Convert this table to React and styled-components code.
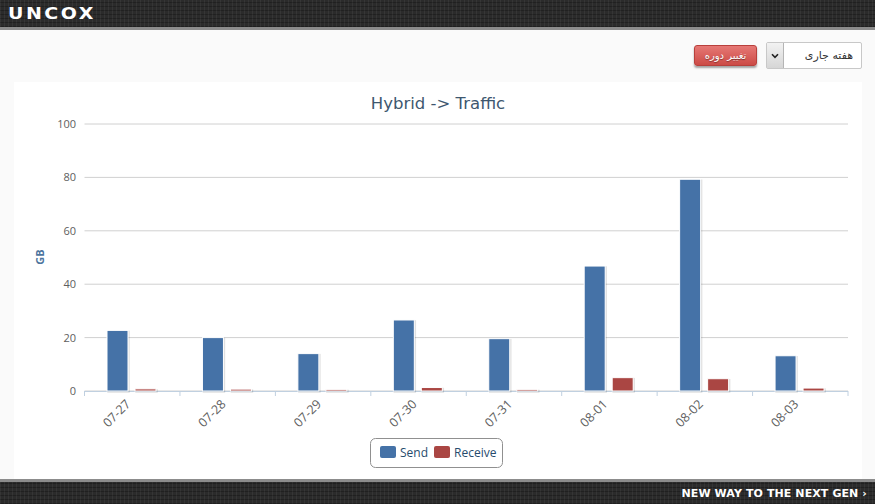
import React from "react";
import styled, { createGlobalStyle } from "styled-components";

const GlobalStyle = createGlobalStyle`
  html, body {
    margin: 0;
    padding: 0;
    background: #fafafa;
    font-family: "Open Sans", "DejaVu Sans", sans-serif;
  }
`;

// dark checked texture used by the header and the footer
const texture = `
  background-color: #2b2b2b;
  background-image:
    repeating-linear-gradient(90deg, rgba(255,255,255,0.05) 0 1px, transparent 1px 4px),
    repeating-linear-gradient(0deg, rgba(0,0,0,0.25) 0 1px, transparent 1px 4px);
`;

const Page = styled.div`
  display: flex;
  flex-direction: column;
  width: 875px;
  height: 504px;
  overflow: hidden;
`;

const Header = styled.header`
  ${texture}
  height: 27px;
  border-bottom: 3px solid #8c8c8c;
  display: flex;
  align-items: center;
  padding-left: 8px;
`;

const Logo = styled.div`
  color: #fff;
  font-family: "DejaVu Sans", sans-serif;
  font-weight: bold;
  font-size: 19px;
  letter-spacing: 2.5px;
  line-height: 1;
  transform: scaleY(0.8);
`;

const Main = styled.main`
  flex: 1;
  display: flex;
  flex-direction: column;
  padding: 12px 13px 0 14px;
  gap: 13px;
  min-height: 0;
`;

const Toolbar = styled.div`
  display: flex;
  justify-content: flex-end;
  align-items: center;
  gap: 9px;
  height: 27px;
`;

const RedButton = styled.button`
  width: 63px;
  height: 21px;
  border: 1px solid #b8403c;
  border-radius: 3px;
  background: linear-gradient(#e67875, #cc4b46);
  box-shadow: 0 2px 2px rgba(0, 0, 0, 0.35);
  color: #fff;
  font-family: "DejaVu Sans", sans-serif;
  font-size: 10px;
  text-shadow: 0 1px 1px rgba(0, 0, 0, 0.4);
  padding: 0;
  direction: rtl;
`;

const SelectBox = styled.div`
  width: 96px;
  height: 27px;
  box-sizing: border-box;
  border: 1px solid #c8c8c8;
  border-radius: 2px;
  background: #fff;
  display: flex;
  align-items: stretch;
`;

const SelectArrow = styled.div`
  width: 16px;
  background: linear-gradient(#f2f2f2, #d6d6d6);
  border-right: 1px solid #b5b5b5;
  display: flex;
  align-items: center;
  justify-content: center;
`;

const SelectText = styled.div`
  flex: 1;
  display: flex;
  align-items: center;
  justify-content: flex-start;
  direction: rtl;
  padding-right: 8px;
  font-family: "DejaVu Sans", sans-serif;
  font-size: 11px;
  color: #333;
`;

const Panel = styled.section`
  flex: 1;
  background: #fff;
  min-height: 0;
`;

const Footer = styled.footer`
  ${texture}
  height: 22px;
  border-top: 3px solid #8c8c8c;
  display: flex;
  align-items: center;
  justify-content: flex-end;
  padding-right: 8px;
`;

const Slogan = styled.div`
  color: #fff;
  font-family: "DejaVu Sans", sans-serif;
  font-weight: bold;
  font-size: 11px;
  letter-spacing: 0.1px;
`;

const categories = ["07-27", "07-28", "07-29", "07-30", "07-31", "08-01", "08-02", "08-03"];
const send = [22.7, 20, 14, 26.6, 19.6, 46.8, 79.3, 13.2];
const receive = [0.8, 0.7, 0.6, 1.3, 0.6, 5, 4.6, 1.1];

const PLOT_LEFT = 84.5;
const PLOT_RIGHT = 848;
const TOP = 124;
const BOTTOM = 391;
const STEP = (PLOT_RIGHT - PLOT_LEFT) / categories.length;
const yOf = (v) => BOTTOM - (v / 100) * (BOTTOM - TOP);

function Bar({ x, value, color }) {
  const y = yOf(value);
  const h = BOTTOM - y;
  return (
    <g>
      <rect x={x + 1} y={y + 1} width={21} height={h} fill="none" stroke="rgba(0,0,0,0.12)" strokeWidth="1.5" />
      <rect x={x} y={y} width={21} height={h} fill={color} stroke="#fff" strokeWidth="1" />
    </g>
  );
}

function TrafficChart() {
  return (
    <svg width="848" height="394" style={{ display: "block" }}>
      <g transform="translate(-14,-82)" fontFamily="'Open Sans', 'DejaVu Sans', sans-serif">
        <text x="438" y="109" textAnchor="middle" fontSize="16.5" fill="#3e576f" fontFamily="'DejaVu Sans', sans-serif">
          Hybrid -&gt; Traffic
        </text>

        {[0, 20, 40, 60, 80, 100].map((v) => (
          <g key={v}>
            <line x1={PLOT_LEFT} x2={PLOT_RIGHT} y1={yOf(v)} y2={yOf(v)} stroke="#d0d0d0" strokeWidth="1" />
            <text x="76" y={yOf(v) + 4} textAnchor="end" fontSize="11" fill="#5e5e5e">
              {v}
            </text>
          </g>
        ))}

        <text
          x="44"
          y="257"
          textAnchor="middle"
          fontSize="11"
          fontWeight="bold"
          fill="#4d759e"
          transform="rotate(-90 44 257)"
        >
          GB
        </text>

        <line x1={PLOT_LEFT} x2={PLOT_RIGHT} y1={BOTTOM + 0.5} y2={BOTTOM + 0.5} stroke="#c0d0e0" />
        {categories.map((c, i) => {
          const left = PLOT_LEFT + i * STEP;
          const center = left + STEP / 2;
          return (
            <g key={c}>
              <line x1={left} x2={left} y1={BOTTOM} y2={BOTTOM + 5} stroke="#c0d0e0" />
              <Bar x={left + 22.5} value={send[i]} color="#4572a7" />
              <Bar x={left + 50.5} value={receive[i]} color="#aa4643" />
              <text
                x={center - 1}
                y={BOTTOM + 14}
                textAnchor="end"
                fontSize="12.5"
                fill="#5e5e5e"
                transform={`rotate(-45 ${center - 1} ${BOTTOM + 14})`}
              >
                {c}
              </text>
            </g>
          );
        })}
        <line x1={PLOT_RIGHT} x2={PLOT_RIGHT} y1={BOTTOM} y2={BOTTOM + 5} stroke="#c0d0e0" />

        <rect x="370.5" y="438.5" width="132" height="29" rx="5" fill="#fff" stroke="#909090" />
        <rect x="380" y="446" width="16" height="12" rx="2" fill="#4572a7" />
        <text x="400" y="457" fontSize="12" fill="#274b6d">Send</text>
        <rect x="434" y="446" width="16" height="12" rx="2" fill="#aa4643" />
        <text x="454" y="457" fontSize="12" fill="#274b6d">Receive</text>
      </g>
    </svg>
  );
}

export default function App() {
  return (
    <>
      <GlobalStyle />
      <Page>
        <Header>
          <Logo>UNCOX</Logo>
        </Header>
        <Main>
          <Toolbar>
            <RedButton>تغییر دوره</RedButton>
            <SelectBox>
              <SelectArrow>
                <svg width="8" height="6" viewBox="0 0 8 6">
                  <path d="M1 1.2 L4 4.4 L7 1.2" fill="none" stroke="#222" strokeWidth="1.6" />
                </svg>
              </SelectArrow>
              <SelectText>هفته جاری</SelectText>
            </SelectBox>
          </Toolbar>
          <Panel>
            <TrafficChart />
          </Panel>
        </Main>
        <Footer>
          <Slogan>NEW WAY TO THE NEXT GEN ›</Slogan>
        </Footer>
      </Page>
    </>
  );
}
